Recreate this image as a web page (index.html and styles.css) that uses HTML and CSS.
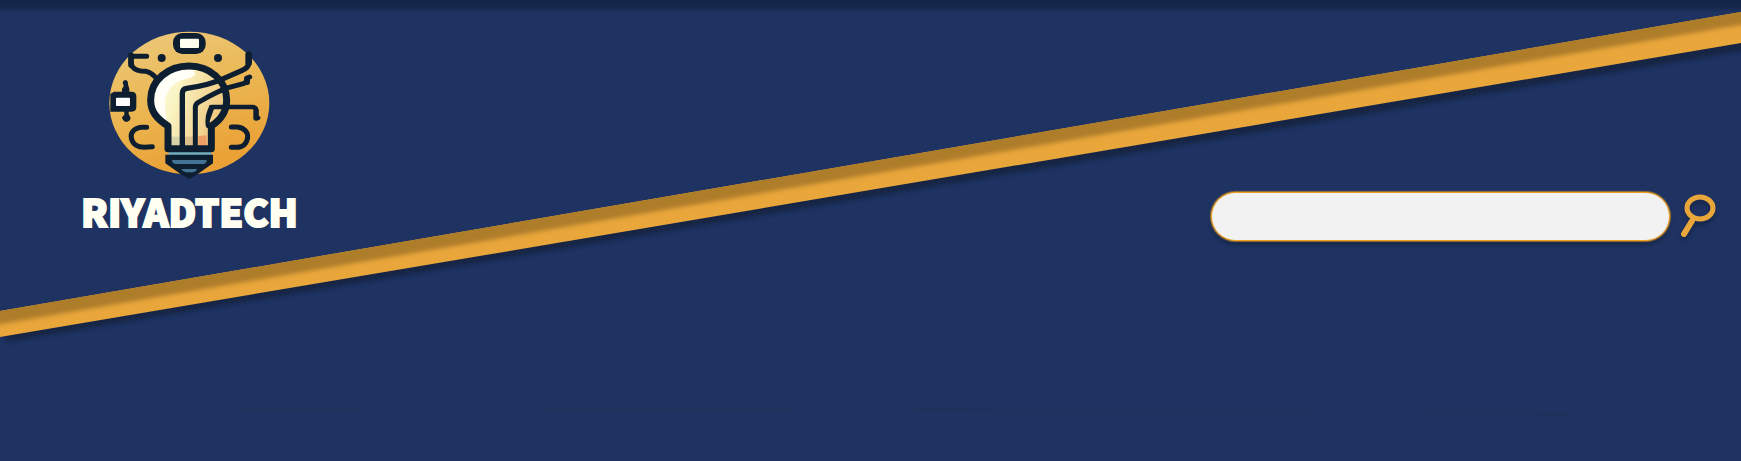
FILE: index.html
```html
<!DOCTYPE html>
<html lang="en">
<head>
<meta charset="utf-8">
<meta name="viewport" content="width=device-width, initial-scale=1">
<title>RiyadTech</title>
<link rel="stylesheet" href="styles.css">
</head>
<body>
<header class="header">
  <svg class="ribbon" viewBox="0 0 1741 461" preserveAspectRatio="none" aria-hidden="true">
    <defs>
      <filter id="soft" x="-5%" y="-10%" width="110%" height="120%"><feGaussianBlur stdDeviation="2"/></filter>
      <clipPath id="band"><path d="M0 311 1741 12V43L0 337Z"/></clipPath>
    </defs>
    <path d="M6 315 1760 14V48L6 342Z" fill="#12203c" opacity=".8" filter="url(#soft)"/>
    <path d="M0 311 1741 12V43L0 337Z" fill="#e9a63b"/>
    <g clip-path="url(#band)"><path d="M-40 298 1780 -15V18L-40 331Z" fill="#ae7d2c" filter="url(#soft)"/></g>
    <g fill="#1d325d">
      <path d="M240 407H365V412H240Z"/>
      <path d="M540 408H792V412H540Z"/>
      <path d="M911 408 1314 410V415L911 412Z"/>
      <path d="M1420 410 1568 412V416L1420 414Z"/>
    </g>
  </svg>

  <a class="brand" href="#">
    <svg class="brand-mark" viewBox="108 30 504 450" aria-hidden="true">
      <defs>
        <linearGradient id="gold" x1="0" y1="0" x2=".35" y2="1">
          <stop offset="0" stop-color="#edca80"/><stop offset=".5" stop-color="#ebb956"/><stop offset="1" stop-color="#eaa136"/>
        </linearGradient>
        <linearGradient id="glass" x1="0" y1="0" x2="1" y2=".35">
          <stop offset="0" stop-color="#fffff0"/><stop offset=".4" stop-color="#faf4c4"/><stop offset="1" stop-color="#efc77d"/>
        </linearGradient>
      </defs>
      <ellipse cx="358" cy="249" rx="240" ry="214" fill="url(#gold)"/>
      <path d="M294 386V318C260 296 242 275 242 240C242 180 295 138 357 138C420 138 470 182 470 240C470 275 452 300 424 318V386Z" fill="url(#glass)"/>
      <path d="M290 310C258 288 250 265 250 236C250 185 300 144 366 148C385 160 372 172 345 178C300 190 279 225 286 270Z" fill="#fffff8"/>
      <path d="M302 350H332V380H302Z" fill="#d5d3a7"/>
      <path d="M344 350H370V380H344Z" fill="#dcc08b"/>
      <path d="M385 348 410 346V380H385Z" fill="#ee9f66"/>
      <path d="M296 392H424V406H296Z" fill="#74aebd"/>
      <g fill="none" stroke="#0d1e30" stroke-width="15" stroke-linecap="round" stroke-linejoin="round">
        <path d="M294 386V318C260 296 242 275 242 240C242 180 295 138 357 138C420 138 470 182 470 240C470 275 452 300 424 318V386Z" stroke-width="21"/>
        <path d="M337 382V220Q337 207 350 205C400 198 430 190 462 175L515 152Q536 143 536 130V106" stroke-width="16"/>
        <path d="M536 104V128" stroke-width="20"/>
        <path d="M376 382V262Q376 252 385 247C425 224 445 213 475 203L520 191Q533 187 531 174L539 171" stroke-width="15"/>
        <path d="M531 176V186" stroke-width="18"/>
        <path d="M414 318C411 300 414 280 424 261H547Q559 261 559 272V294H565" stroke-width="13"/>
        <path d="M558 272V294" stroke-width="16"/>
        <path d="M230 109H185Q180 128 188 141Q198 154 228 154Q242 157 255 170"/>
        <path d="M183 106V135" stroke-width="17"/>
        <path d="M230 322H216C190 324 181 340 184 355C188 374 204 382 222 382L247 380"/>
        <path d="M484 321H502C523 323 534 337 533 352C531 372 517 382 501 382H484"/>
      </g>
      <g fill="#0d1e30">
        <path d="M418 256H436L420 300 408 312Z"/>
        <circle cx="275" cy="114" r="12"/><circle cx="444" cy="114" r="12"/>
        <rect x="309" y="39" width="98" height="63" rx="28"/>
        <path d="M132 215H185Q199 215 199 229V261Q199 275 185 275H121V222Z"/>
        <path d="M158 187Q160 180 168 180Q175 183 174 193L178 207V218H156V207L161 199Z"/>
        <path d="M163 270H176V282L182 294Q180 304 168 306Q157 302 156 292L163 284Z"/>
        <path d="M286 404H429V430L379 465 358 477 336 465 286 430Z"/>
      </g>
      <rect x="330" y="56" width="57" height="28" rx="4" fill="#fffff0"/>
      <rect x="138" y="233" width="42" height="25" rx="2" fill="#fff"/>
      <path d="M306 420H410Q410 431 400 432H316Q306 430 306 420Z" fill="#437394"/>
      <path d="M334 447H381Q378 457 366 457H348Q337 455 334 447Z" fill="#437394"/>
    </svg>
    <span class="brand-name">RIYADTECH</span>
  </a>

  <form class="search" role="search">
    <input class="search-field" type="search" aria-label="Search">
    <button class="search-button" type="button" aria-label="Search">
      <svg class="search-icon" viewBox="0 0 38 46" aria-hidden="true">
        <ellipse cx="19" cy="14" rx="13" ry="11" fill="none" stroke="#e9a63b" stroke-width="5"/>
        <path d="M11 27 3 40" stroke="#e9a63b" stroke-width="6" stroke-linecap="round"/>
      </svg>
    </button>
  </form>
</header>
</body>
</html>
```
FILE: styles.css
```css
* {
  box-sizing: border-box;
}

body {
  margin: 0;
  background: #1e3362;
  font-family: "Noto Sans CJK SC", "Noto Sans", sans-serif;
}

.header {
  position: relative;
  display: flex;
  justify-content: space-between;
  align-items: flex-start;
  min-height: 100vh;
  padding: 30px 22px 30px 81px;
  background: linear-gradient(#15264a 0, #15264a 6px, #1e3362 13px);
}

.ribbon {
  position: absolute;
  inset: 0;
  width: 100%;
  height: 100%;
}

.brand {
  position: relative;
  display: flex;
  flex-direction: column;
  align-items: center;
  gap: 9px;
  color: #fffff2;
  text-decoration: none;
}

.brand-mark {
  width: 168px;
  height: 150px;
}

.brand-name {
  font-size: 38px;
  font-weight: 900;
  line-height: 44px;
  -webkit-text-stroke: 2px #fffff2;
}

.search {
  position: relative;
  display: flex;
  align-items: center;
  gap: 11px;
  width: 31%;
  min-width: 280px;
  margin-top: 162px;
}

.search-field {
  flex: 1;
  min-width: 0;
  height: 49px;
  padding: 0 24px;
  border: 1px solid #f0a020;
  border-radius: 25px;
  outline: 0;
  background: #f2f2f2;
  box-shadow: 0 0 1px 1px rgba(240, 160, 32, 0.6), 0 4px 4px rgba(0, 0, 0, 0.25);
  font-size: 20px;
  appearance: none;
}

.search-button {
  display: flex;
  padding: 0;
  border: 0;
  background: none;
  cursor: pointer;
}

.search-icon {
  width: 38px;
  height: 46px;
  overflow: visible;
  filter: drop-shadow(0 4px 2px rgba(0, 0, 0, 0.25));
}
```
